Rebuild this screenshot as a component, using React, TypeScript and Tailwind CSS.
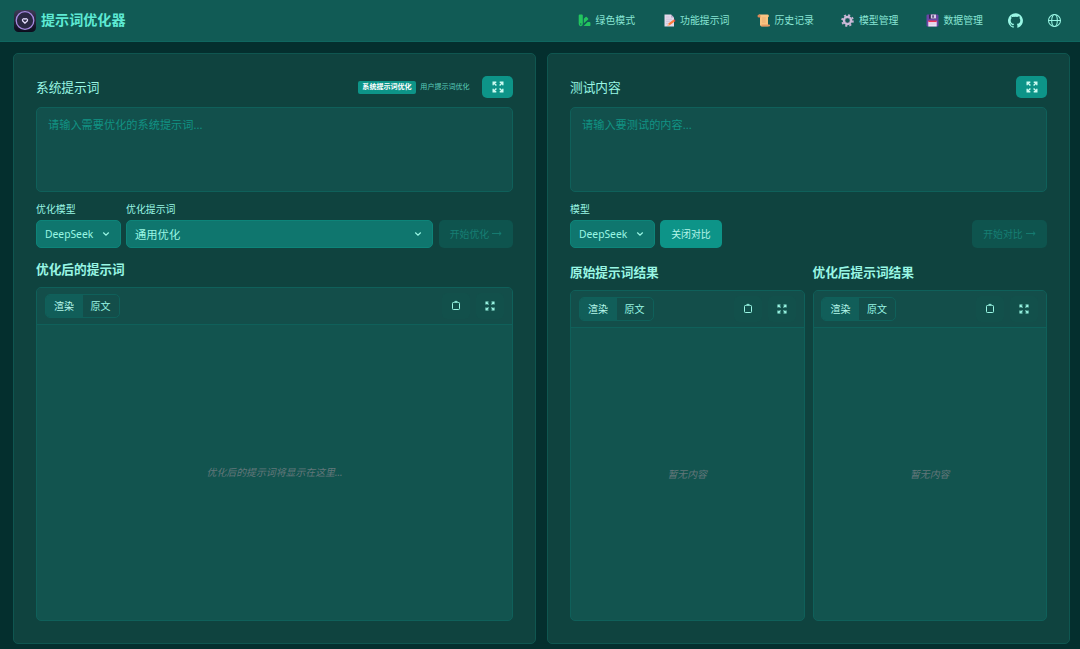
import type { ReactNode } from 'react';

function Expand({ size }: { size: number }) {
  return (
    <svg width={size} height={size} viewBox="0 0 12 12" fill="none" stroke="currentColor" strokeWidth="1.4" className="shrink-0">
      <path d="M1.200 4.300V1.200h3.100M1.200 1.200l3.200 3.200M7.700 1.200h3.100v3.100M10.800 1.200L7.600 4.400M1.200 7.700v3.100h3.100M1.200 10.800l3.200-3.200M10.800 7.700v3.100H7.700M10.800 10.800L7.600 7.600" />
    </svg>
  );
}

function SmallExpand() {
  return (
    <svg width="10" height="10" viewBox="0 0 10 10" fill="none" stroke="currentColor" strokeWidth="1.1" className="shrink-0">
      <path d="M1 3.500V1h2.500M1 1l2.500 2.500M6.500 1H9v2.500M9 1L6.500 3.500M1 6.500V9h2.500M1 9l2.500-2.500M9 6.500V9H6.500M9 9L6.500 6.500" />
    </svg>
  );
}

function Clipboard() {
  return (
    <svg width="10" height="11" viewBox="0 0 10 11" fill="none" stroke="currentColor" strokeWidth="1" className="shrink-0">
      <path d="M3 2.500H2.300a.8.800 0 0 0-.8.800v5.400a.8.800 0 0 0 .8.800h5.400a.8.800 0 0 0 .8-.8V3.300a.8.800 0 0 0-.8-.8H7" />
      <path d="M3.200 2.500l.7-1.200h2.200l.7 1.200z" fill="currentColor" strokeWidth=".6" />
    </svg>
  );
}

function Chevron() {
  return (
    <svg width="8" height="8" viewBox="0 0 8 8" fill="none" stroke="currentColor" strokeWidth="1.200" strokeLinecap="round" className="shrink-0">
      <path d="M1.500 2.800L4 5.200l2.500-2.400" />
    </svg>
  );
}

function Logo() {
  return (
    <svg width="24" height="24" viewBox="0 0 24 24" className="shrink-0">
      <defs>
        <linearGradient id="tile" x1="0" y1="0" x2="0" y2="1">
          <stop offset="0" stopColor="#3c3b56" />
          <stop offset="1" stopColor="#0b0c1c" />
        </linearGradient>
      </defs>
      <rect x="1" y="1" width="22" height="22" rx="4.500" fill="url(#tile)" />
      <circle cx="12" cy="11.500" r="8.800" fill="#2a2843" stroke="#a68ae0" strokeWidth="1.300" />
      <path d="M12 14.200L9.600 11.800a1.450 1.450 0 0 1 2.400-1.600 1.450 1.450 0 0 1 2.400 1.600z" fill="none" stroke="#e4dcfa" strokeWidth="1.300" />
    </svg>
  );
}

function Swatch() {
  return (
    <svg width="13" height="13" viewBox="0 0 13 13" fill="#22c55e">
      <path d="M1.700.5h2.100a1 1 0 0 1 1 1v8.600a2 2 0 0 1-4.100 0V1.500a1 1 0 0 1 1-1z" />
      <path d="M5.800 9.200V4.800l1.800-1.900a.8.8 0 0 1 1.100 0l1.400 1.500a.8.8 0 0 1 0 1.100z" />
      <path d="M5.600 12.100l4-4h1.900a.9.900 0 0 1 .9.900v2.200a.9.900 0 0 1-.9.900z" />
      <circle cx="2.750" cy="10" r=".7" fill="#105c56" />
    </svg>
  );
}

function Memo() {
  return (
    <svg width="13" height="13" viewBox="0 0 13 13">
      <path d="M1.500.5H8l3 3v9H1.500z" fill="#e3d9ea" />
      <path d="M8 .5v3h3z" fill="#b7a5c6" />
      <path d="M3 3h3.500M3 5.200h6M3 7.400h4M3 9.600h2" stroke="#cbbdd6" strokeWidth=".7" />
      <path d="M4.500 11.800l.8-2.300 5.200-3.700 1.300 1.700-5.100 3.800z" fill="#ff7b3a" />
      <path d="M10.500 5.800l.8-.6 1.300 1.700-.8.600z" fill="#f23f5d" />
      <path d="M4.500 11.800l.8-2.300 1.400 1.800z" fill="#f9c99a" />
    </svg>
  );
}

function Scroll() {
  return (
    <svg width="13" height="13" viewBox="0 0 13 13">
      <path d="M2 .5h8.500a1.400 1.400 0 0 1 .5 2.700v9H4a1.500 1.500 0 0 1-1-1.500V3.200z" fill="#fac481" />
      <path d="M2 .5a1.400 1.400 0 0 0 0 3h1.400V1.700A1.300 1.300 0 0 0 2 .5z" fill="#de8958" />
      <path d="M4.500 10.500h7.800a1 1 0 0 1-.7 2H4.300z" fill="#e79b64" />
      <path d="M5 4h3.700M5 6h3.700M5 8h3.700" stroke="#e5a36c" strokeWidth=".7" />
    </svg>
  );
}

function Gear() {
  return (
    <svg width="13" height="13" viewBox="0 0 13 13" fill="none">
      <circle cx="6.500" cy="6.500" r="5.400" stroke="#c4b2d2" strokeWidth="1.800" strokeDasharray="2.120 2.120" />
      <circle cx="6.500" cy="6.500" r="3.600" stroke="#cdbdd9" strokeWidth="2.300" />
      <circle cx="6.500" cy="6.500" r="2.300" stroke="#927aa5" strokeWidth=".5" />
    </svg>
  );
}

function Floppy() {
  return (
    <svg width="13" height="13" viewBox="0 0 13 13">
      <path d="M1.500.5h10.200l.8.8v10.200a1 1 0 0 1-1 1h-10a1 1 0 0 1-1-1v-10a1 1 0 0 1 1-1z" fill="#6b46a5" />
      <path d="M3 .5h7v4.200H3z" fill="#34234f" />
      <path d="M4.800.5H10v4H4.800z" fill="#d9cce8" />
      <path d="M6.300 1.300h1.500v2.500H6.300z" fill="#433b6b" />
      <path d="M2.300 7h8.400v5.500H2.300z" fill="#eee2f3" />
      <path d="M2.300 6.500h8.400v1.600H2.300z" fill="#ed3658" />
      <path d="M3.300 10h6.400" stroke="#cfbddb" strokeWidth=".7" />
    </svg>
  );
}

function Github() {
  return (
    <svg width="15" height="15" viewBox="0 0 24 24" fill="currentColor">
      <path d="M12 .3a12 12 0 0 0-3.800 23.380c.6.110.820-.260.820-.580v-2.230c-3.340.730-4.040-1.420-4.040-1.420-.550-1.390-1.330-1.760-1.330-1.760-1.090-.740.080-.730.080-.730 1.200.090 1.840 1.240 1.840 1.240 1.070 1.830 2.800 1.300 3.490 1 .1-.780.420-1.310.760-1.610-2.660-.3-5.460-1.330-5.460-5.930 0-1.310.470-2.380 1.240-3.220-.140-.3-.540-1.520.1-3.180 0 0 1-.320 3.300 1.230a11.500 11.500 0 0 1 6 0c2.280-1.550 3.290-1.230 3.290-1.230.640 1.660.240 2.880.120 3.180a4.650 4.650 0 0 1 1.230 3.220c0 4.610-2.800 5.620-5.480 5.920.420.360.810 1.100.810 2.220v3.290c0 .320.190.690.800.570A12 12 0 0 0 12 .3" />
    </svg>
  );
}

function Globe() {
  return (
    <svg width="15" height="15" viewBox="0 0 15 15" fill="none" stroke="currentColor" strokeWidth="1.050">
      <circle cx="7.500" cy="7.500" r="6" />
      <ellipse cx="7.500" cy="7.500" rx="2.800" ry="6" />
      <path d="M1.500 7.500h12" />
    </svg>
  );
}

function NavItem({ icon, label }: { icon: ReactNode; label: string }) {
  return (
    <div className="flex items-center gap-[4.500px] text-[9.900px]">
      {icon}
      <span className="text-[#88e5d4]">{label}</span>
    </div>
  );
}

function ExpandButton() {
  return (
    <button className="flex h-[22px] w-[31px] shrink-0 items-center justify-center rounded-[5px] bg-[#0d9488] text-[#ccfbf1]">
      <Expand size={12} />
    </button>
  );
}

function ModelSelect() {
  return (
    <div className="flex h-7 w-[85px] items-center justify-between rounded-[5px] border border-[#0d8479] bg-[#0f766e] pr-[10px] pl-2 text-[10.300px] text-[#99f6e4]">
      <span>DeepSeek</span>
      <Chevron />
    </div>
  );
}

function StartButton({ label, width }: { label: string; width: string }) {
  return (
    <button disabled className={`ml-auto flex h-7 shrink-0 items-center justify-center gap-[3px] rounded-[5px] bg-[#0e544e] text-[9.900px] text-[#167f74] ${width}`}>
      <span className="pt-[2px]">{label}</span>
      <svg width="10" height="8" viewBox="0 0 10 8" fill="none" stroke="currentColor" strokeWidth=".9">
        <path d="M0 3.500h9M7 1.700l2.200 1.800L7 5.300" />
      </svg>
    </button>
  );
}

function Output({ placeholder }: { placeholder: string }) {
  return (
    <div className="flex min-h-0 flex-1 flex-col overflow-hidden rounded-[5px] border border-[#0f605a] bg-[#12544f]">
      <div className="flex h-[37px] shrink-0 items-center border-b border-[#0f605a] bg-[#134e4a] pr-[8px] pb-px pl-[7.500px]">
        <div className="flex h-6 overflow-hidden rounded-[5px] border border-[#0f605a] text-[10px] text-[#99f6e4]">
          <span className="flex w-[37px] items-center justify-center bg-[#115e59] text-[#b5f7ea]">渲染</span>
          <span className="flex w-[36px] items-center justify-center">原文</span>
        </div>
        <div className="ml-auto flex gap-[6px] text-[#99f6e4]">
          <span className="flex h-[26px] w-7 items-center justify-center rounded-[5px] bg-[#12504b]"><Clipboard /></span>
          <span className="flex h-[26px] w-7 items-center justify-center rounded-[5px] bg-[#12504b]"><SmallExpand /></span>
        </div>
      </div>
      <div className="flex flex-1 items-center justify-center pt-px text-[9.900px] text-[#62777a] italic">{placeholder}</div>
    </div>
  );
}

function Panel({ children }: { children: ReactNode }) {
  return <section className="flex min-w-0 flex-1 flex-col rounded-[5px] border border-[#0f5650] bg-[#0f433f] px-[22px] pt-[22px] pb-[22px]">{children}</section>;
}

function TextArea({ placeholder }: { placeholder: string }) {
  return <div className="mt-[9px] h-[85px] shrink-0 rounded-[5px] border border-[#0f605a] bg-[#12504c] px-[11px] pt-[8px] text-[11.200px] leading-[18px] text-[#119384]">{placeholder}</div>;
}

export default function App() {
  return (
    <div className="flex h-[649px] w-[1080px] flex-col overflow-hidden bg-[#042f2e] font-['Noto_Sans','Noto_Sans_CJK_SC',sans-serif] leading-none whitespace-nowrap text-[#99f6e4]">
      <header className="flex h-[42px] shrink-0 items-center border-b border-[#0f665f] bg-[#115b55] pr-[18px] pl-[13px]">
        <Logo />
        <h1 className="ml-[4px] text-[14.100px] font-bold text-[#5eead4]">提示词优化器</h1>
        <nav className="ml-auto flex items-center text-[#99f6e4]">
          <div className="mr-[27.500px]"><NavItem icon={<Swatch />} label="绿色模式" /></div>
          <div className="mr-[27.500px]"><NavItem icon={<Memo />} label="功能提示词" /></div>
          <div className="mr-[27.500px]"><NavItem icon={<Scroll />} label="历史记录" /></div>
          <div className="mr-[27.500px]"><NavItem icon={<Gear />} label="模型管理" /></div>
          <div className="mr-[24.500px]"><NavItem icon={<Floppy />} label="数据管理" /></div>
          <div className="mr-[24.500px]"><Github /></div>
          <Globe />
        </nav>
      </header>
      <main className="flex min-h-0 flex-1 gap-[11px] pt-[11px] pr-[10px] pb-[5px] pl-[13px]">
        <Panel>
          <div className="flex h-[22px] items-center">
            <h2 className="text-[12.700px]">系统提示词</h2>
            <div className="ml-auto flex text-[7.050px]">
              <span className="flex h-[13px] w-[58px] items-center justify-center rounded-[2px] bg-[#0d9488] font-bold text-white">系统提示词优化</span>
              <span className="flex h-[13px] w-[58px] items-center justify-center text-[#5ccfbd]">用户提示词优化</span>
            </div>
            <div className="ml-[8px]"><ExpandButton /></div>
          </div>
          <TextArea placeholder="请输入需要优化的系统提示词..." />
          <div className="mt-[13px] flex h-[10px] shrink-0 items-center text-[9.900px]">
            <span className="w-[90px]">优化模型</span>
            <span>优化提示词</span>
          </div>
          <div className="mt-[5px] flex gap-[5px]">
            <ModelSelect />
            <div className="flex h-7 w-[307px] items-center justify-between rounded-[5px] border border-[#0d8479] bg-[#0f766e] pr-[10px] pl-[8px] text-[11.300px]">
              <span className="pt-px">通用优化</span>
              <Chevron />
            </div>
            <StartButton label="开始优化" width="w-[74px]" />
          </div>
          <h3 className="mt-[12px] mb-[9px] flex h-[18px] shrink-0 items-center text-[12.700px] font-bold">优化后的提示词</h3>
          <Output placeholder="优化后的提示词将显示在这里..." />
        </Panel>
        <Panel>
          <div className="flex h-[22px] items-center justify-between">
            <h2 className="text-[12.700px]">测试内容</h2>
            <ExpandButton />
          </div>
          <TextArea placeholder="请输入要测试的内容..." />
          <div className="mt-[13px] flex h-[10px] shrink-0 items-center text-[9.900px]">模型</div>
          <div className="mt-[5px] flex gap-[5px]">
            <ModelSelect />
            <button className="h-7 w-[62px] rounded-[5px] bg-[#0d9488] pt-[2px] text-[9.900px] text-[#b3f5e8]">关闭对比</button>
            <StartButton label="开始对比" width="w-[75px]" />
          </div>
          <div className="mt-[15px] flex min-h-0 flex-1 gap-[8px]">
            {[
              ['原始提示词结果', '暂无内容'],
              ['优化后提示词结果', '暂无内容'],
            ].map(([title, empty]) => (
              <div key={title} className="flex min-w-0 flex-1 flex-col">
                <h3 className="mb-[9px] flex h-[18px] shrink-0 items-center text-[12.700px] font-bold">{title}</h3>
                <Output placeholder={empty} />
              </div>
            ))}
          </div>
        </Panel>
      </main>
    </div>
  );
}
